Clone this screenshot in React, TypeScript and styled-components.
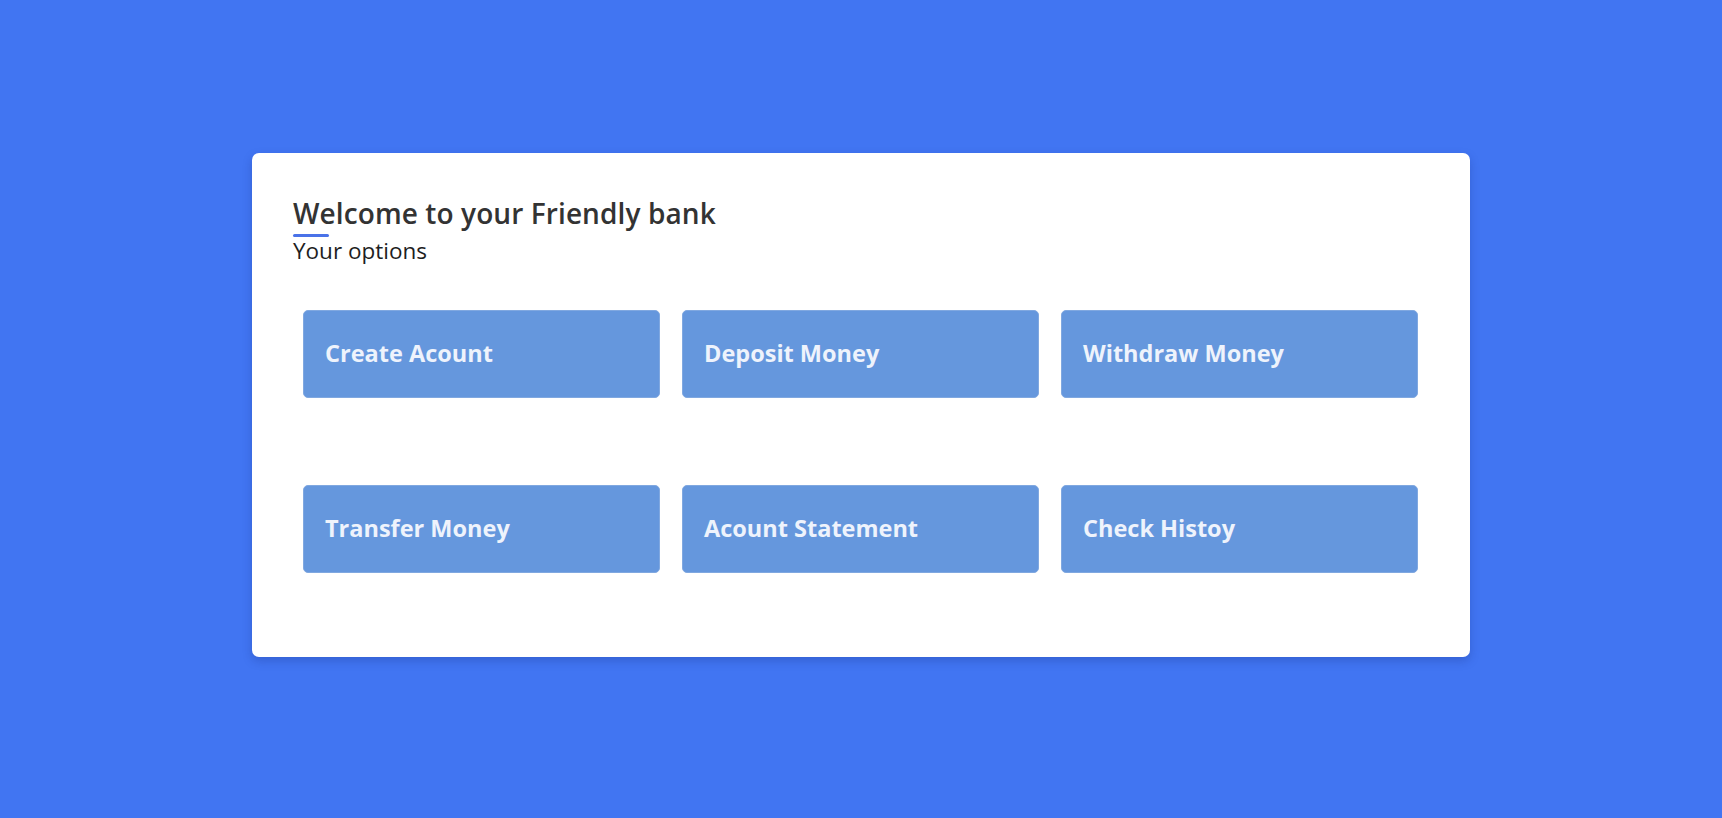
import React from "react";
import styled, { createGlobalStyle } from "styled-components";

const GlobalStyle = createGlobalStyle`
  html, body {
    margin: 0;
    padding: 0;
    background: #4175f2;
  }
  body {
    font-family: "Open Sans", "Noto Sans", sans-serif;
  }
  * { box-sizing: border-box; }
`;

const Page = styled.div`
  min-height: 818px;
  background: #4175f2;
  display: flex;
  justify-content: center;
  align-items: flex-start;
  padding-top: 153px;
`;

const Card = styled.section`
  width: 1218px;
  background: #ffffff;
  border-radius: 7px;
  box-shadow: 0 4px 10px rgba(20, 40, 120, 0.25);
  padding: 44px 41px 84px 41px;
`;

const Title = styled.h1`
  margin: 0;
  font-family: "Open Sans", "Noto Sans", sans-serif;
  font-weight: 600;
  font-size: 28px;
  letter-spacing: 0.1px;
  line-height: 32px;
  color: #333333;
`;

const Underline = styled.div`
  width: 36px;
  height: 3px;
  margin-top: 5px;
  background: #4a72e8;
  border-radius: 2px;
`;

const Subtitle = styled.p`
  margin: 1px 0 0 0;
  font-size: 22.5px;
  line-height: 26px;
  font-weight: 400;
  color: #1e1e1e;
`;

const Grid = styled.div`
  display: grid;
  grid-template-columns: repeat(3, 1fr);
  column-gap: 22px;
  row-gap: 87px;
  margin-top: 46px;
  padding: 0 11px 0 10px;
`;

const OptionButton = styled.button`
  height: 88px;
  display: flex;
  align-items: center;
  padding: 0 0 2px 21px;
  background: #6597dd;
  border: 1px solid #80a8e0;
  border-radius: 5px;
  color: #eef3fc;
  font-family: "Open Sans", "Noto Sans", sans-serif;
  font-weight: 700;
  font-size: 23.5px;
  text-align: left;
  cursor: pointer;
`;

const options = [
  "Create Acount",
  "Deposit Money",
  "Withdraw Money",
  "Transfer Money",
  "Acount Statement",
  "Check Histoy",
];

export default function App() {
  return (
    <>
      <GlobalStyle />
      <Page>
        <Card>
          <Title>Welcome to your Friendly bank</Title>
          <Underline />
          <Subtitle>Your options</Subtitle>
          <Grid>
            {options.map((o) => (
              <OptionButton key={o}>{o}</OptionButton>
            ))}
          </Grid>
        </Card>
      </Page>
    </>
  );
}
